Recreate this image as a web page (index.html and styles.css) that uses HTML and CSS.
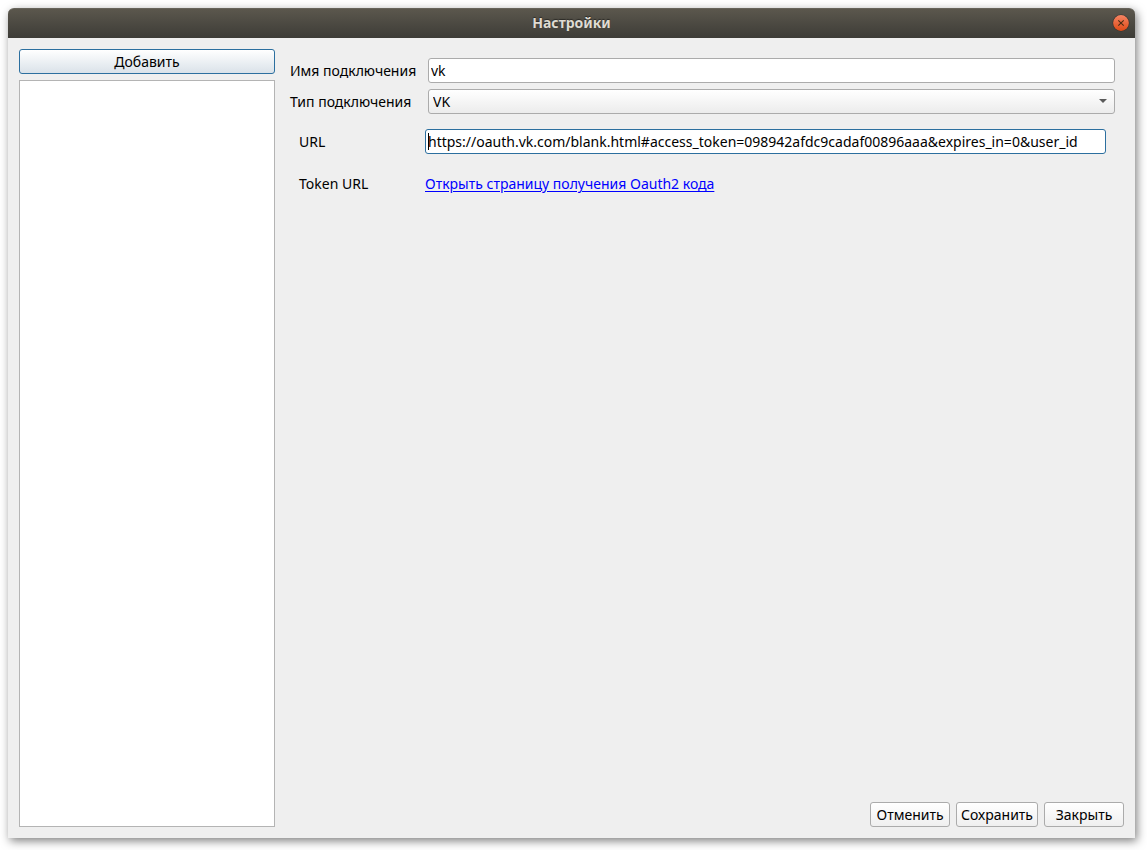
FILE: index.html
```html
<!DOCTYPE html>
<html lang="ru">
<head>
<meta charset="utf-8">
<title>Настройки</title>
<link rel="stylesheet" href="styles.css">
</head>
<body>
<main class="window">
  <header class="titlebar">
    <h1 class="title">Настройки</h1>
    <button class="close" type="button" aria-label="Закрыть окно">
      <svg viewBox="0 0 18 18" width="18" height="18" aria-hidden="true">
        <defs><linearGradient id="orb" x1="0" y1="0" x2="0" y2="1"><stop offset="0" stop-color="#f58463"/><stop offset="1" stop-color="#df4a16"/></linearGradient></defs>
        <circle cx="9" cy="9" r="8.5" fill="#35342f"/>
        <circle cx="9" cy="9" r="7.9" fill="url(#orb)"/>
        <path d="M6.3 6.3l5.4 5.4M11.7 6.3l-5.4 5.4" stroke="#4a2c12" stroke-width="1.1"/>
      </svg>
    </button>
  </header>
  <div class="content">
    <aside class="sidebar">
      <button class="button button-default" type="button">Добавить</button>
      <div class="list" role="listbox" aria-label="Подключения"></div>
    </aside>
    <form class="panel">
      <div class="fields">
        <label for="name">Имя подключения</label>
        <input class="control" id="name" type="text" value="vk">
        <label for="type">Тип подключения</label>
        <div class="combo">
          <select class="control select" id="type"><option>VK</option></select>
          <svg class="arrow" viewBox="0 0 8 4" width="8" height="4" aria-hidden="true"><path d="M0 0h8L4 4z" fill="#5a5a5a"/></svg>
        </div>
      </div>
      <div class="fields details">
        <label for="url">URL</label>
        <div class="combo">
          <input class="control control-current" id="url" type="text" value="https://oauth.vk.com/blank.html#access_token=098942afdc9cadaf00896aaa&amp;expires_in=0&amp;user_id">
          <span class="caret"></span>
        </div>
        <span>Token URL</span>
        <div><a class="link" href="#">Открыть страницу получения Oauth2 кода</a></div>
      </div>
      <footer class="actions">
        <button class="button" type="button">Отменить</button>
        <button class="button" type="button">Сохранить</button>
        <button class="button" type="button">Закрыть</button>
      </footer>
    </form>
  </div>
</main>
</body>
</html>
```
FILE: styles.css
```css
* { box-sizing: border-box; }

body {
  margin: 0;
  min-height: 100vh;
  padding: 8px 12px 12px 8px;
  display: flex;
  background: #fff;
  color: #000;
  font: 14px/20px "Noto Sans", "Open Sans", sans-serif;
}

.window {
  flex: 1;
  min-width: 0;
  display: flex;
  flex-direction: column;
  background: #efefef;
  border-radius: 6px 6px 0 0;
  box-shadow: 2px 3px 10px rgba(0, 0, 0, 0.5);
}

.titlebar {
  position: relative;
  height: 30px;
  padding-bottom: 2px;
  display: flex;
  align-items: center;
  justify-content: center;
  border-radius: 6px 6px 0 0;
  border-top: 1px solid #66635a;
  background: linear-gradient(#5b574d, #3d3c37);
}

.title {
  margin: 0;
  color: #dfdbd2;
  font-size: 14px;
  line-height: 20px;
  font-weight: 700;
  text-shadow: 0 -1px 1px #2b2a26;
}

.close {
  position: absolute;
  top: 5px;
  right: 5px;
  padding: 0;
  border: 0;
  background: none;
  line-height: 0;
}

.content {
  flex: 1;
  display: flex;
  gap: 15px;
  padding: 11px;
}

.sidebar {
  flex: 0 0 256px;
  display: flex;
  flex-direction: column;
  gap: 6px;
}

.list {
  flex: 1;
  border: 1px solid #b4b4b4;
  background: #fff;
}

.button {
  height: 25px;
  min-width: 80px;
  padding: 0 4px;
  border: 1px solid #ababab;
  border-radius: 3px;
  background: linear-gradient(#fff, #efefef);
  color: inherit;
  font: inherit;
  line-height: 20px;
}

.button-default {
  border-color: #2c6f9f;
  background: linear-gradient(#fff, #dae2e9);
}

.panel {
  flex: 1;
  min-width: 0;
  display: flex;
  flex-direction: column;
}

.fields {
  display: grid;
  grid-template-columns: 132px 1fr;
  align-items: center;
  gap: 6px;
  padding: 9px 9px 0 0;
  white-space: nowrap;
}

.details {
  grid-template-columns: 120px 1fr;
  row-gap: 20px;
  padding: 15px 18px 0 9px;
}

.control {
  display: block;
  width: 100%;
  height: 25px;
  padding: 0 2px;
  border: 1px solid #ababab;
  border-radius: 3px;
  background: #fff;
  color: inherit;
  font: inherit;
}

.select {
  appearance: none;
  padding: 0 4px;
  background: linear-gradient(#fff, #ececec);
}

.control-current { border-color: #2c6f9f; }

.combo { position: relative; }

.arrow {
  position: absolute;
  top: 10px;
  right: 8px;
}

.caret {
  position: absolute;
  top: 4px;
  left: 3px;
  width: 1px;
  height: 17px;
  background: #000;
}

.link {
  color: #00f;
  text-underline-offset: 2px;
}

.actions {
  margin-top: auto;
  display: flex;
  justify-content: flex-end;
  gap: 6px;
}
```
